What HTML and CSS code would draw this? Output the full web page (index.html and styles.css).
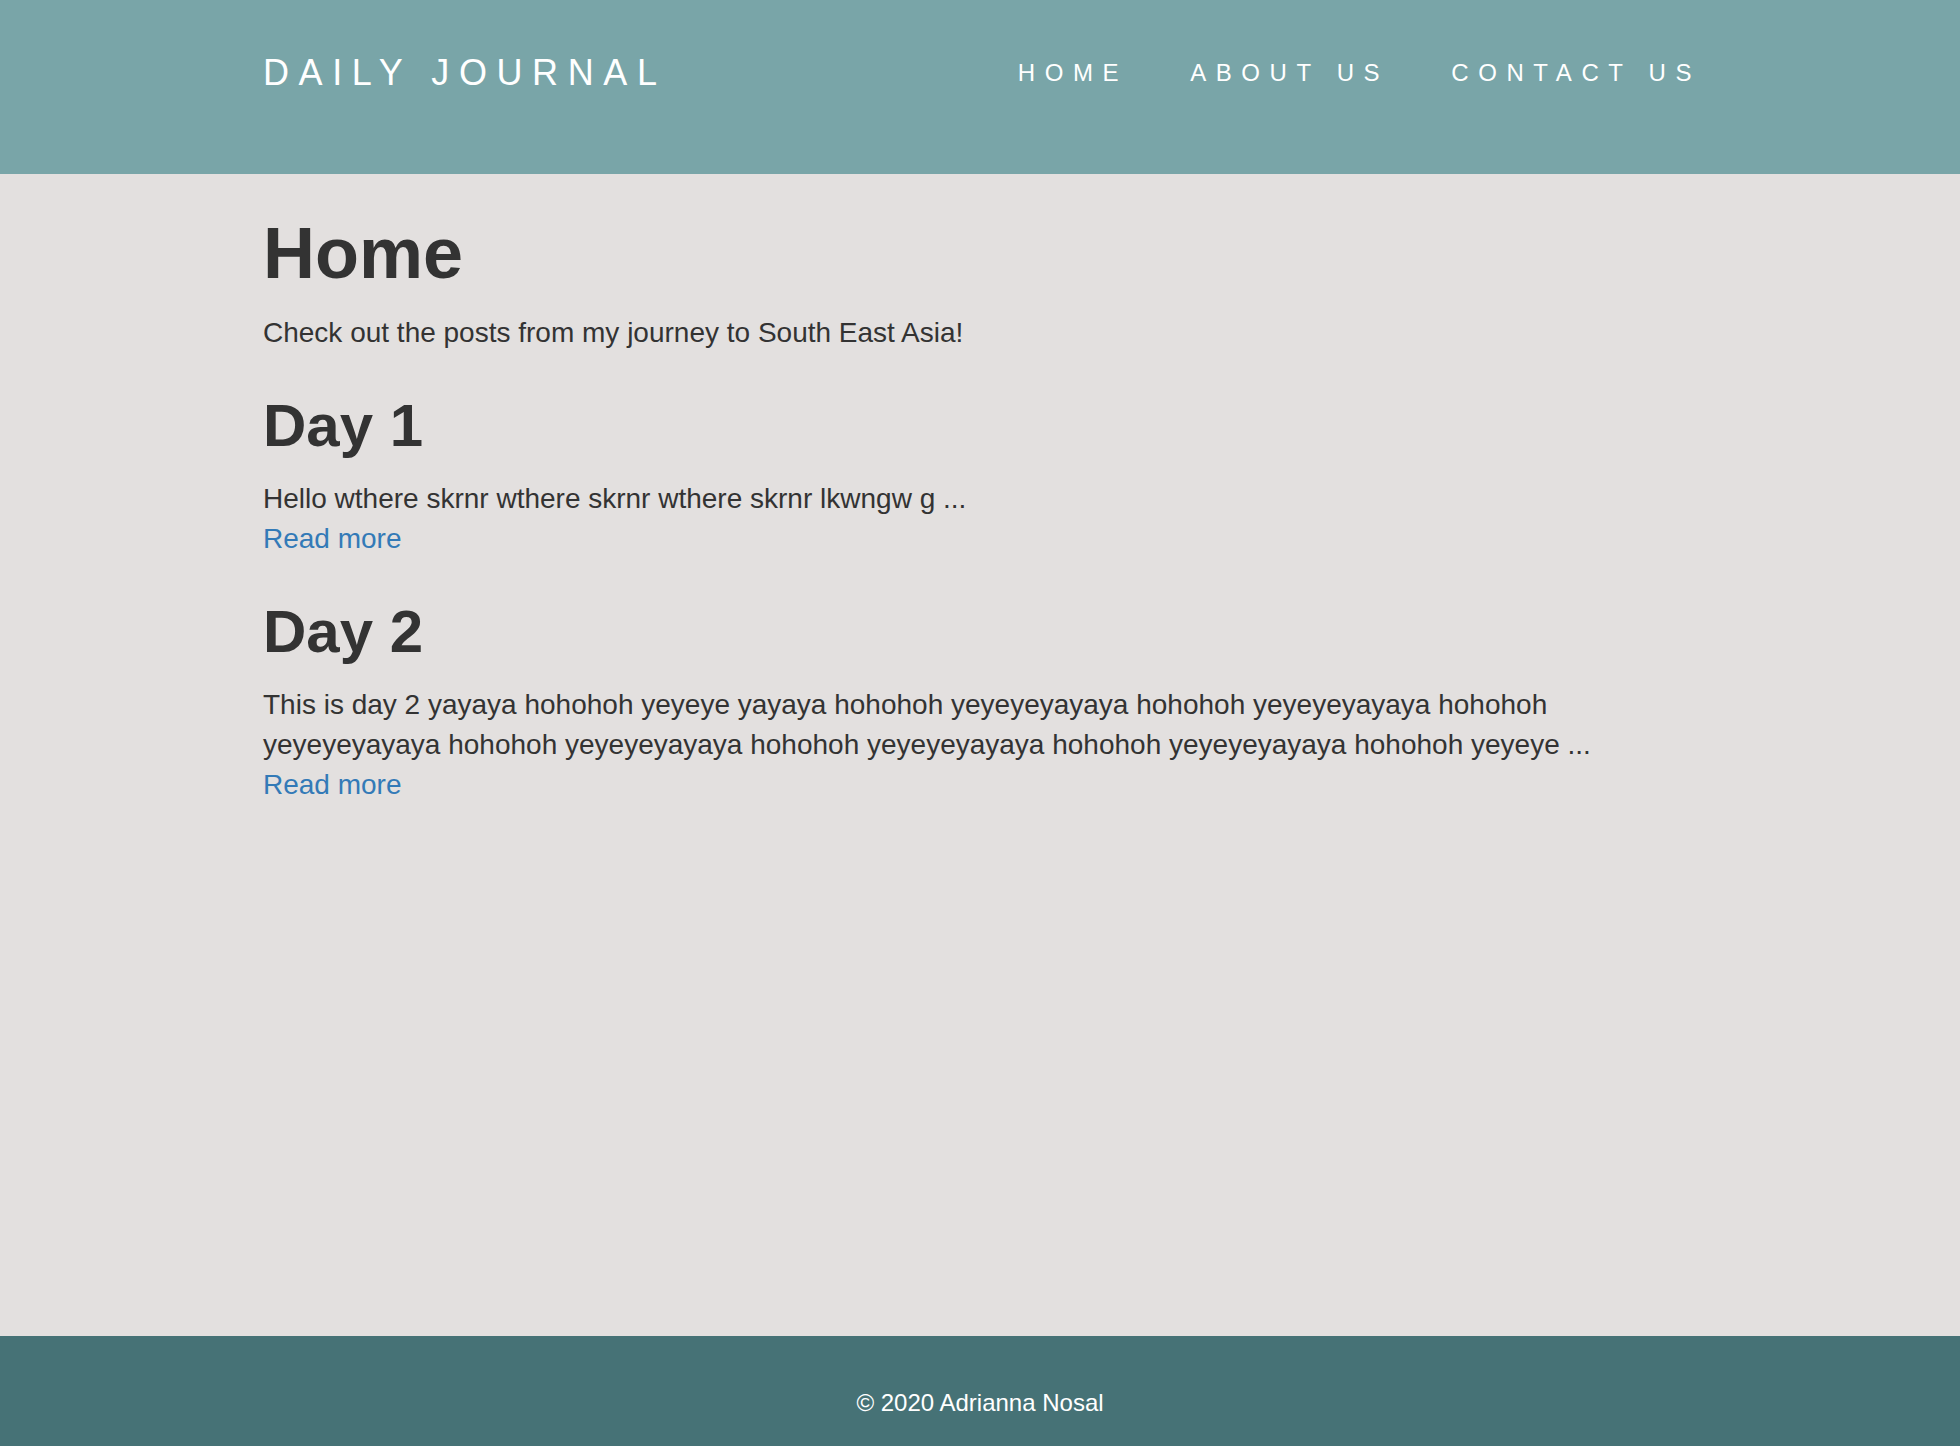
FILE: index.html
```html
<!DOCTYPE html>
<html lang="en">
<head>
<meta charset="utf-8">
<title>Daily Journal</title>
<link rel="stylesheet" href="styles.css">
</head>
<body>
<div class="page">
  <header class="site-header">
    <div class="container header-row">
      <a class="brand" href="#">DAILY JOURNAL</a>
      <nav>
        <ul class="nav-list">
          <li><a href="#">HOME</a></li>
          <li><a href="#">ABOUT US</a></li>
          <li><a href="#">CONTACT US</a></li>
        </ul>
      </nav>
    </div>
  </header>
  <main class="container content">
    <h1>Home</h1>
    <p>Check out the posts from my journey to South East Asia!</p>
    <h2>Day 1</h2>
    <p>Hello wthere skrnr wthere skrnr wthere skrnr lkwngw g ...<br><a href="#">Read more</a></p>
    <h2>Day 2</h2>
    <p>This is day 2 yayaya hohohoh yeyeye yayaya hohohoh yeyeyeyayaya hohohoh yeyeyeyayaya hohohoh yeyeyeyayaya hohohoh yeyeyeyayaya hohohoh yeyeyeyayaya hohohoh yeyeyeyayaya hohohoh yeyeye ...<br><a href="#">Read more</a></p>
  </main>
  <footer class="site-footer">
    <p>© 2020 Adrianna Nosal</p>
  </footer>
</div>
</body>
</html>
```
FILE: styles.css
```css
* { box-sizing: border-box; }

html, body {
  margin: 0;
  padding: 0;
}

body {
  background-color: #e3e0df;
  color: #333333;
  font-family: "Liberation Sans", Arial, Helvetica, sans-serif;
  font-size: 28px;
  line-height: 40px;
}

.page {
  min-height: 100vh;
  display: flex;
  flex-direction: column;
}

.container {
  width: 1440px;
  margin: 0 auto;
  padding-left: 3px;
}

.site-header {
  background-color: #79a5a8;
  height: 174px;
}

.header-row {
  display: flex;
  justify-content: space-between;
  align-items: flex-start;
  padding-top: 53px;
}

.brand {
  color: #ffffff;
  text-decoration: none;
  font-size: 36px;
  line-height: 40px;
  letter-spacing: 9.6px;
}

.nav-list {
  list-style: none;
  margin: 0 -32px 0 0;
  padding: 0;
  display: flex;
}

.nav-list a {
  display: block;
  padding: 0 31px;
  color: #ffffff;
  text-decoration: none;
  font-size: 24px;
  line-height: 40px;
  letter-spacing: 9.6px;
}

.content {
  flex: 1;
}

h1, h2 {
  font-weight: 700;
  line-height: 1.1;
  margin: 40px 0 20px;
  color: #333333;
}

h1 {
  font-size: 72px;
}

h2 {
  font-size: 60px;
}

p {
  margin: 0 0 20px;
}

a {
  color: #337ab7;
  text-decoration: none;
}

.site-footer {
  background-color: #467276;
  height: 110px;
  text-align: center;
  color: #ffffff;
}

.site-footer p {
  margin: 50px 0 0;
  font-size: 24px;
  line-height: 34px;
}
```
